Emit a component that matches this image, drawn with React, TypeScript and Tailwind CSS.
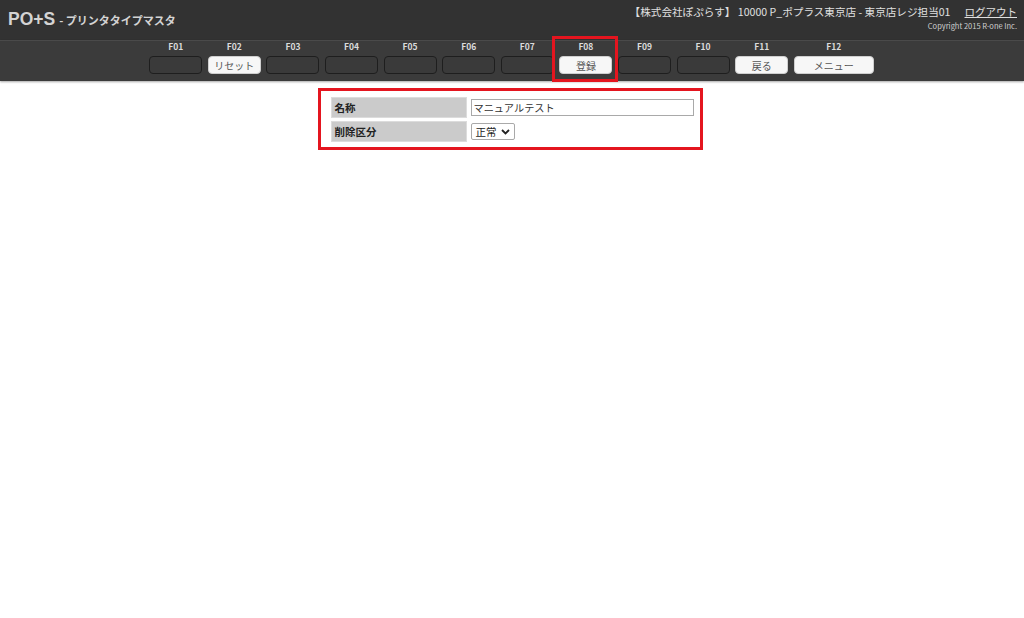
import React from "react";

const keys: { f: string; label: string; w?: number }[] = [
  { f: "F01", label: "" },
  { f: "F02", label: "リセット" },
  { f: "F03", label: "" },
  { f: "F04", label: "" },
  { f: "F05", label: "" },
  { f: "F06", label: "" },
  { f: "F07", label: "" },
  { f: "F08", label: "登録" },
  { f: "F09", label: "" },
  { f: "F10", label: "" },
  { f: "F11", label: "戻る" },
  { f: "F12", label: "メニュー", w: 80 },
];

export default function App() {
  const font = { fontFamily: '"Noto Sans CJK JP", "Noto Sans", sans-serif' };
  return (
    <div className="w-[1024px] h-[618px] bg-white" style={font}>
      <div className="h-[40px] bg-[#323232] flex items-start justify-between px-[8px]">
        <div className="flex items-baseline mt-[6px] text-[#d4d4d4] font-bold">
          <span className="text-[17.5px]" style={{ fontFamily: '"Liberation Sans", Arial, sans-serif' }}>PO+S</span>
          <span className="text-[11px] ml-[4px]">- プリンタタイプマスタ</span>
        </div>
        <div className="flex flex-col items-end mt-[4px] mr-[-1px]">
          <div className="text-[10.6px] text-[#e0e0e0] leading-[16px] flex">
            <span>【株式会社ぽぷらす】 10000 P_ポプラス東京店 - 東京店レジ担当01</span>
            <span className="underline ml-[14px] text-[10.5px]">ログアウト</span>
          </div>
          <div className="text-[7.5px] text-[#d0d0d0] leading-[10px] mt-[1px]">Copyright 2015 R-one Inc.</div>
        </div>
      </div>
      <div className="h-[41px] bg-[#3b3b3b] border-t border-[#4a4a4a] shadow-[0_1px_2px_rgba(0,0,0,0.35)] flex justify-center">
        <div className="flex gap-[5.6px] ml-[-1px]">
          {keys.map((k) => (
            <div key={k.f} className={`flex flex-col items-center ${k.f === "F08" ? "relative" : ""}`}>
              {k.f === "F08" && (
                <div className="absolute left-[-7px] right-[-6px] top-[-5px] bottom-[-1px] border-[3px] border-[#e4151f]" />
              )}
              <div className="text-[8.5px] font-bold text-[#dcdcdc] leading-[10px]">{k.f}</div>
              <div
                className={`mt-[5px] h-[18px] rounded-[4px] flex items-center justify-center text-[10px] ${
                  k.label
                    ? "bg-[#f7f7f7] border border-[#cfcfcf] text-[#555]"
                    : "bg-[#3a3a3a] border border-[#1e1e1e]"
                }`}
                style={{ width: k.w ?? 53 }}
              >
                {k.label}
              </div>
            </div>
          ))}
        </div>
      </div>
      <div className="flex justify-center mt-[7px]">
        <div className="w-[385px] ml-[-4px] border-[3px] border-[#e4151f] pl-[10px] pr-[5px] pt-[6px] pb-[5px] flex flex-col gap-[3px]">
          <div className="flex items-center gap-[4px]">
            <div className="w-[136px] h-[21px] bg-[#cbcbcb] border border-[#dcdcdc] flex items-center pl-[3px] text-[10.5px] font-bold text-[#222]">名称</div>
            <input
              readOnly
              value="マニュアルテスト"
              className="w-[223px] h-[17px] border border-[#a9a9a9] px-[2px] text-[10.2px] text-[#333] outline-none"
              style={font}
            />
          </div>
          <div className="flex items-center gap-[4px]">
            <div className="w-[136px] h-[21px] bg-[#cbcbcb] border border-[#dcdcdc] flex items-center pl-[3px] text-[10.5px] font-bold text-[#222]">削除区分</div>
            <div className="w-[44px] h-[17px] border border-[#a9a9a9] rounded-[2px] flex items-center justify-between px-[4px] text-[10.5px] text-[#222] bg-white">
              <span>正常</span>
              <svg width="9" height="6" viewBox="0 0 9 6"><path d="M1 1 L4.5 4.5 L8 1" stroke="#222" strokeWidth="1.8" fill="none" /></svg>
            </div>
          </div>
        </div>
      </div>
    </div>
  );
}
